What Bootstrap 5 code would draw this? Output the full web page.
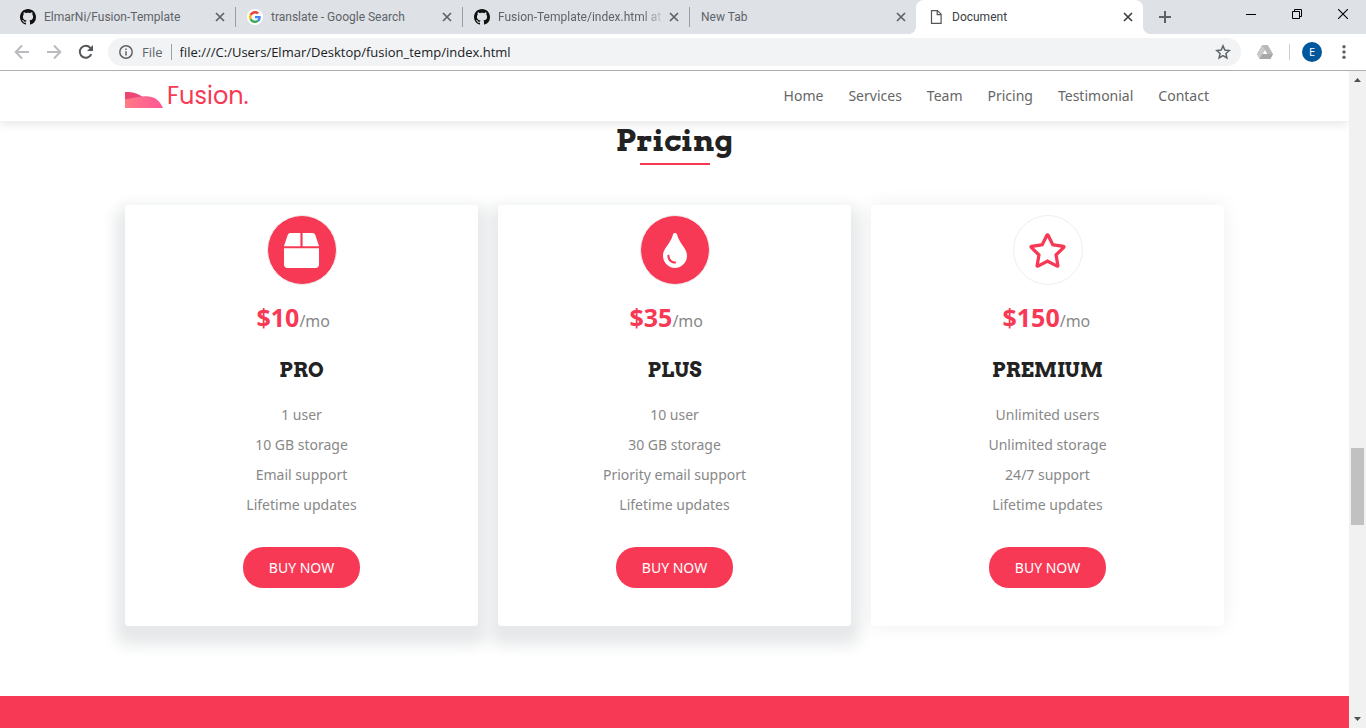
<!DOCTYPE html>
<html lang="en">
<head>
<meta charset="utf-8">
<meta name="viewport" content="width=device-width, initial-scale=1">
<title>Document</title>
<link href="https://cdn.jsdelivr.net/npm/bootstrap@5.3.0/dist/css/bootstrap.min.css" rel="stylesheet">
<style>
  :root { --accent: #f83955; --chrome: #dee1e6; --ink: #5f6368; }
  body { font-family: "Noto Sans", sans-serif; font-size: 14px; line-height: 20px; color: #222; }
  svg { display: block; flex: none; }

  /* browser window */
  .browser { font-family: "Open Sans", sans-serif; color: var(--ink); position: relative; z-index: 3; }
  .browser button { border: 0; background: none; padding: 0; color: inherit; }
  .tabs { background: var(--chrome); height: 34px; padding-left: 8px; }
  .tab { flex: 0 1 227px; min-width: 0; padding: 0 10px 0 12px; font-family: Roboto, sans-serif; font-size: 12px; position: relative; }
  .tab a { color: inherit; text-decoration: none; overflow: hidden; white-space: nowrap; }
  .tab-fade { -webkit-mask-image: linear-gradient(90deg, #000 88%, rgba(0,0,0,.2)); mask-image: linear-gradient(90deg, #000 88%, rgba(0,0,0,.2)); }
  .tab-line::after { content: ""; position: absolute; right: -1px; top: 7px; bottom: 7px; width: 1px; background: #9b9ea3; }
  .tab-active { background: #fff; border-radius: 8px 8px 0 0; color: #3c4043; }
  .tab-active::before, .tab-active::after { content: ""; position: absolute; bottom: 0; width: 8px; height: 8px; }
  .tab-active::before { left: -8px; background: radial-gradient(circle at 0 0, transparent 8px, #fff 8px); }
  .tab-active::after { right: -8px; background: radial-gradient(circle at 100% 0, transparent 8px, #fff 8px); }
  .browser .win-btn { width: 46px; height: 28px; color: #000; }
  .toolbar { height: 37px; padding: 4px 14px; border-bottom: 1px solid #b0b0b0; background: #fff; }
  .omnibox { background: #f1f3f4; border-radius: 14px; height: 28px; padding: 0 10px; margin-left: 14px; }
  .omnibox input { border: 0; background: none; outline: 0; padding: 0; color: #202124; min-width: 0; font-size: 13px; }
  .omnibox label { font-size: 13px; }
  .rule { width: 1px; height: 16px; background: #9aa0a6; }
  .profile { gap: 14px; margin-left: -4px; }
  .avatar { width: 20px; height: 20px; background: #01579b; color: #fff; font-size: 11px; }

  .scroll { width: 17px; background: #f1f1f1; position: relative; z-index: 3; }
  .scroll-thumb { flex: 77 1 0; width: 13px; background: #c1c1c1; }

  /* web page */
  .wrap { width: 100%; max-width: 1099px; margin: 0 auto; }
  .site-nav { height: 50px; background: #fff; box-shadow: 0 3px 10px rgba(0,0,0,.1); position: relative; z-index: 2; }
  .brand-name { font-family: "Poppins", "Lato", sans-serif; font-size: 24px; line-height: 30px; color: var(--accent); }
  .site-nav .nav { gap: 25px; padding-right: 15px; }
  .site-nav .nav-link { padding: 0; color: #666; }
  .slab { font-family: "Arvo", "DejaVu Serif", serif; font-weight: 700; color: #222; }
  .section-title { font-size: 30px; line-height: 38px; padding-bottom: 4px; }
  .title-rule { width: 70px; height: 2px; background: var(--accent); opacity: 1; border: 0; }
  .plans { display: grid; grid-template-columns: repeat(auto-fit, minmax(240px, 1fr)); gap: 20px; padding: 40px 0 70px; }
  .plan { background: #fff; border-radius: 4px; padding: 10px 20px 38px; text-align: center; box-shadow: 0 0 20px rgba(0,0,0,.07); }
  .plan-deep { box-shadow: 0 10px 15px 9px #e6e8e9; }
  .plan-icon { width: 70px; height: 70px; border: 1px solid #eee; color: var(--accent); }
  .plan-deep .plan-icon { background: var(--accent); color: #fff; }
  .price { width: 90px; font-size: 16px; line-height: 34px; color: #888; margin-top: 15px; text-align: left; white-space: nowrap; }
  .price strong { font-size: 25px; color: var(--accent); }
  .plan h3 { font-size: 20px; line-height: 30px; margin: 17px 0 15px; }
  .plan ul { line-height: 30px; color: #888; margin-bottom: 27px; }
  .btn-buy, .btn-buy:hover { background: var(--accent); color: #fff; border: 0; border-radius: 20px; font-size: 14px; line-height: 21px; padding: 10px 26px; }
  .band { background: var(--accent); min-height: 32px; }
</style>
</head>
<body class="d-flex flex-column min-vh-100">

<header class="browser">
  <div class="tabs d-flex">
    <div class="tab tab-line d-flex align-items-center gap-2">
      <svg width="16" height="16" viewBox="0 0 16 16" fill="#111"><path id="octo" d="M8 0C3.58 0 0 3.58 0 8c0 3.54 2.29 6.53 5.47 7.59.4.07.55-.17.55-.38 0-.19-.01-.82-.01-1.49-2.01.37-2.53-.49-2.69-.94-.09-.23-.48-.94-.82-1.13-.28-.15-.68-.52-.01-.53.63-.01 1.08.58 1.23.82.72 1.21 1.87.87 2.33.66.07-.52.28-.87.51-1.07-1.78-.2-3.64-.89-3.64-3.95 0-.87.31-1.59.82-2.15-.08-.2-.36-1.02.08-2.12 0 0 .67-.21 2.2.82.64-.18 1.32-.27 2-.27s1.36.09 2 .27c1.53-1.04 2.2-.82 2.2-.82.44 1.1.16 1.92.08 2.12.51.56.82 1.27.82 2.15 0 3.07-1.87 3.75-3.65 3.95.29.25.54.73.54 1.48 0 1.07-.01 1.93-.01 2.2 0 .21.15.46.55.38A8.01 8.01 0 0 0 16 8c0-4.42-3.58-8-8-8"/></svg>
      <a href="#" class="flex-grow-1">ElmarNi/Fusion-Template</a>
      <button type="button" aria-label="Close tab"><svg width="10" height="10" viewBox="0 0 10 10" stroke="currentColor" stroke-width="1.7"><path d="M1 1l8 8M9 1l-8 8"/></svg></button>
    </div>
    <div class="tab tab-line d-flex align-items-center gap-2">
      <svg width="16" height="16" viewBox="-8 -8 64 64"><circle cx="24" cy="24" r="32" fill="#fff"/><path fill="#EA4335" d="M24 9.5c3.54 0 6.71 1.22 9.21 3.6l6.85-6.85C35.9 2.38 30.47 0 24 0 14.62 0 6.51 5.38 2.56 13.22l7.98 6.19C12.43 13.72 17.74 9.5 24 9.5z"/><path fill="#4285F4" d="M46.98 24.55c0-1.57-.15-3.09-.38-4.55H24v9.02h12.94c-.58 2.96-2.26 5.48-4.78 7.18l7.73 6c4.51-4.18 7.09-10.36 7.09-17.65z"/><path fill="#FBBC05" d="M10.53 28.59c-.48-1.45-.76-2.99-.76-4.59s.27-3.14.76-4.59l-7.98-6.19C.92 16.46 0 20.12 0 24c0 3.88.92 7.54 2.56 10.78l7.97-6.19z"/><path fill="#34A853" d="M24 48c6.48 0 11.93-2.13 15.89-5.81l-7.73-6c-2.15 1.45-4.92 2.3-8.16 2.3-6.26 0-11.57-4.22-13.47-9.91l-7.98 6.19C6.51 42.62 14.62 48 24 48z"/></svg>
      <a href="#" class="flex-grow-1">translate - Google Search</a>
      <button type="button" aria-label="Close tab"><svg width="10" height="10" viewBox="0 0 10 10" stroke="currentColor" stroke-width="1.7"><path d="M1 1l8 8M9 1l-8 8"/></svg></button>
    </div>
    <div class="tab tab-line d-flex align-items-center gap-2">
      <svg width="16" height="16" viewBox="0 0 16 16" fill="#111"><use href="#octo"/></svg>
      <a href="#" class="flex-grow-1 tab-fade">Fusion-Template/index.html at</a>
      <button type="button" aria-label="Close tab"><svg width="10" height="10" viewBox="0 0 10 10" stroke="currentColor" stroke-width="1.7"><path d="M1 1l8 8M9 1l-8 8"/></svg></button>
    </div>
    <div class="tab d-flex align-items-center gap-2">
      <a href="#" class="flex-grow-1">New Tab</a>
      <button type="button" aria-label="Close tab"><svg width="10" height="10" viewBox="0 0 10 10" stroke="currentColor" stroke-width="1.7"><path d="M1 1l8 8M9 1l-8 8"/></svg></button>
    </div>
    <div class="tab tab-active d-flex align-items-center gap-2">
      <svg width="16" height="16" viewBox="0 0 16 16" fill="none" stroke="#555" stroke-width="1.2"><path d="M3.5 1.6h6l3.6 3.6v9.2H3.5zM9.2 1.6v4h4"/></svg>
      <a href="#" class="flex-grow-1">Document</a>
      <button type="button" aria-label="Close tab"><svg width="10" height="10" viewBox="0 0 10 10" stroke="currentColor" stroke-width="1.7"><path d="M1 1l8 8M9 1l-8 8"/></svg></button>
    </div>
    <button type="button" class="px-3" aria-label="New tab"><svg width="12" height="12" viewBox="0 0 12 12" stroke="currentColor" stroke-width="2"><path d="M6 0v12M0 6h12"/></svg></button>
    <div class="d-flex ms-auto">
      <button type="button" class="win-btn d-flex align-items-center justify-content-center" aria-label="Minimize"><svg width="10" height="10" viewBox="0 0 10 10" stroke="currentColor"><path d="M0 5.5h10"/></svg></button>
      <button type="button" class="win-btn d-flex align-items-center justify-content-center" aria-label="Restore"><svg width="10" height="10" viewBox="0 0 10 10" fill="none" stroke="currentColor"><path d="M.5 2.5h7v7h-7zM2.5 2.5v-2h7v7h-2"/></svg></button>
      <button type="button" class="win-btn d-flex align-items-center justify-content-center" aria-label="Close"><svg width="10" height="10" viewBox="0 0 10 10" stroke="currentColor" stroke-width="1.1"><path d="M0 0l10 10M10 0L0 10"/></svg></button>
    </div>
  </div>

  <div class="toolbar d-flex align-items-center">
    <div class="d-flex gap-3">
      <button type="button" aria-label="Back"><svg width="16" height="16" viewBox="0 0 16 16" fill="none" stroke="#b9bbbe" stroke-width="2"><path d="M15 8H2M8 1.500L1.700 8 8 14.500"/></svg></button>
      <button type="button" aria-label="Forward"><svg width="16" height="16" viewBox="0 0 16 16" fill="none" stroke="#b9bbbe" stroke-width="2"><path d="M1 8h13M8 1.500L14.300 8 8 14.500"/></svg></button>
      <button type="button" aria-label="Reload"><svg width="16" height="16" viewBox="0 0 16 16"><path d="M13.300 10.200A6 6 0 1 1 12.300 3.800L13.500 5" fill="none" stroke="#54575b" stroke-width="2"/><path d="M15 1v6H9z" fill="#54575b"/></svg></button>
    </div>
    <div class="omnibox d-flex align-items-center flex-grow-1">
      <svg class="me-2" width="16" height="16" viewBox="0 0 16 16" fill="none" stroke="currentColor" stroke-width="1.500"><circle cx="8" cy="8" r="6.200"/><path d="M8 7.200v4.300M8 4.500v1.500"/></svg>
      <label for="url">File</label>
      <span class="rule mx-2"></span>
      <input id="url" class="flex-grow-1" type="text" value="file:///C:/Users/Elmar/Desktop/fusion_temp/index.html">
      <button type="button" aria-label="Bookmark"><svg width="16" height="16" viewBox="0 0 16 16" fill="none" stroke="currentColor" stroke-width="1.500"><path d="M8 1.900l1.800 4.200 4.500.4-3.400 3 1 4.400L8 11.600l-3.900 2.300 1-4.400-3.400-3 4.500-.4z"/></svg></button>
    </div>
    <div class="d-flex align-items-center gap-3 ms-3">
      <svg width="16" height="16" viewBox="0 0 16 16"><path d="M5.300 1h5.400L16 10l-2.700 5H2.700L0 10z" fill="#b8b8b8"/><path d="M5.300 1L0 10l2.700 5L8 5.700z" fill="#c9c9c9"/><path d="M2.700 15L5.400 10H16l-2.700 5z" fill="#a8a8a8"/><path d="M8 6l2.300 4H5.700z" fill="#fff"/></svg>
      <span class="rule opacity-50"></span>
      <span class="profile d-flex align-items-center">
        <span class="avatar rounded-circle d-flex align-items-center justify-content-center">E</span>
        <button type="button" aria-label="Menu"><svg width="16" height="16" viewBox="0 0 16 16" fill="currentColor"><circle cx="8" cy="2.800" r="1.700"/><circle cx="8" cy="8" r="1.700"/><circle cx="8" cy="13.200" r="1.700"/></svg></button>
      </span>
    </div>
  </div>
</header>

<div class="d-flex flex-grow-1">
  <div class="d-flex flex-column flex-grow-1">
    <nav class="site-nav d-flex align-items-center">
      <div class="wrap d-flex align-items-center justify-content-between">
        <a href="#" class="d-flex align-items-center text-decoration-none">
          <svg class="mt-2" width="42" height="16" viewBox="0 0 42 16"><defs><linearGradient id="hill" x2="1" y2="0"><stop offset="0" stop-color="#ff7a85"/><stop offset="1" stop-color="#ff5597"/></linearGradient><linearGradient id="hillback" x2="1" y2="0"><stop offset="0" stop-color="#ee4470"/><stop offset="1" stop-color="#e94680"/></linearGradient></defs><path d="M0 0c7-.4 12 1 18 5l-2 6H0z" fill="url(#hillback)"/><path d="M0 7c6 0 9-2.400 18-2.600C28 3.500 34 7 38 16H0z" fill="url(#hill)"/></svg>
          <span class="brand-name">Fusion.</span>
        </a>
        <ul class="nav">
          <li><a class="nav-link" href="#">Home</a></li>
          <li><a class="nav-link" href="#">Services</a></li>
          <li><a class="nav-link" href="#">Team</a></li>
          <li><a class="nav-link" href="#">Pricing</a></li>
          <li><a class="nav-link" href="#">Testimonial</a></li>
          <li><a class="nav-link" href="#">Contact</a></li>
        </ul>
      </div>
    </nav>

    <main class="wrap">
      <h2 class="section-title slab text-center m-0">Pricing</h2>
      <hr class="title-rule mx-auto my-0">
      <div class="plans">
        <section class="plan plan-deep">
          <div class="plan-icon rounded-circle mx-auto d-flex align-items-center justify-content-center"><svg width="35" height="35" viewBox="0 0 512 512" fill="currentColor"><path d="M509.500 184.600L458.900 32.800C452.400 13.200 434.100 0 413.400 0H272v192h238.700c-.4-2.500-.4-5-1.200-7.400zM240 0H98.600c-20.700 0-39 13.200-45.500 32.800L2.500 184.600c-.8 2.400-.8 4.900-1.200 7.400H240V0zM0 224v240c0 26.500 21.500 48 48 48h416c26.500 0 48-21.500 48-48V224H0z"/></svg></div>
          <p class="price mx-auto mb-0"><strong>$10</strong>/mo</p>
          <h3 class="slab">PRO</h3>
          <ul class="list-unstyled"><li>1 user</li><li>10 GB storage</li><li>Email support</li><li>Lifetime updates</li></ul>
          <button type="button" class="btn btn-buy">BUY NOW</button>
        </section>
        <section class="plan plan-deep">
          <div class="plan-icon rounded-circle mx-auto d-flex align-items-center justify-content-center"><svg width="24" height="35" viewBox="0 0 352 512" fill="currentColor"><path d="M205.220 22.090c-7.940-28.780-49.440-30.120-58.440 0C100.010 179.850 0 222.720 0 333.910 0 432.350 78.720 512 176 512s176-79.650 176-178.090c0-111.750-99.790-153.340-146.780-311.820zM176 448c-61.750 0-112-50.250-112-112 0-8.840 7.160-16 16-16s16 7.160 16 16c0 44.110 35.890 80 80 80 8.840 0 16 7.160 16 16s-7.160 16-16 16z"/></svg></div>
          <p class="price mx-auto mb-0"><strong>$35</strong>/mo</p>
          <h3 class="slab">PLUS</h3>
          <ul class="list-unstyled"><li>10 user</li><li>30 GB storage</li><li>Priority email support</li><li>Lifetime updates</li></ul>
          <button type="button" class="btn btn-buy">BUY NOW</button>
        </section>
        <section class="plan">
          <div class="plan-icon rounded-circle mx-auto d-flex align-items-center justify-content-center"><svg width="39" height="35" viewBox="0 0 576 512" fill="currentColor"><path d="M528.100 171.500L382 150.200 316.700 17.800c-11.700-23.600-45.600-23.900-57.400 0L194 150.200 47.900 171.500c-26.200 3.800-36.700 36.100-17.700 54.600l105.700 103-25 145.500c-4.500 26.300 23.200 46 46.400 33.700L288 439.600l130.700 68.700c23.200 12.200 50.900-7.400 46.400-33.700l-25-145.500 105.700-103c19-18.500 8.500-50.800-17.700-54.600zM388.600 312.300l23.700 138.400L288 385.400l-124.300 65.300 23.700-138.400-100.600-98 139-20.200 62.200-126 62.200 126 139 20.200-100.600 98z"/></svg></div>
          <p class="price mx-auto mb-0"><strong>$150</strong>/mo</p>
          <h3 class="slab">PREMIUM</h3>
          <ul class="list-unstyled"><li>Unlimited users</li><li>Unlimited storage</li><li>24/7 support</li><li>Lifetime updates</li></ul>
          <button type="button" class="btn btn-buy">BUY NOW</button>
        </section>
      </div>
    </main>
    <div class="band flex-grow-1"></div>
  </div>

  <div class="scroll d-flex flex-column align-items-center flex-shrink-0" aria-hidden="true">
    <svg width="17" height="17" viewBox="0 0 17 17" fill="#505050"><path d="M5 11l3.500-4 3.500 4z"/></svg>
    <div style="flex: 360 1 0"></div>
    <div class="scroll-thumb"></div>
    <div style="flex: 186 1 0"></div>
    <svg width="17" height="17" viewBox="0 0 17 17" fill="#505050"><path d="M5 6l3.500 4L12 6z"/></svg>
  </div>
</div>

<script src="https://cdn.jsdelivr.net/npm/bootstrap@5.3.0/dist/js/bootstrap.bundle.min.js"></script>
</body>
</html>
